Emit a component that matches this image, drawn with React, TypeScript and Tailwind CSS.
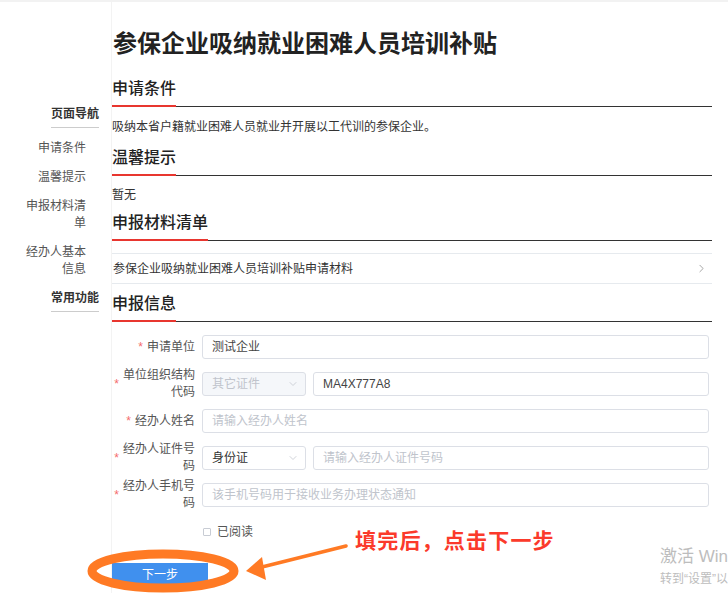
import React from 'react';
import { ChevronDown, ChevronRight } from 'lucide-react';

const navItems = ['申请条件', '温馨提示', '申报材料清单', '经办人基本信息'];

function SectionTitle({ title, className }: { title: string; className?: string }) {
    return (
        <div className={`flex border-b border-[#333] ${className ?? ''}`}>
            <span className="-mb-px border-b-2 border-[#e8362f] pb-[5px] text-[16px] font-medium leading-[22px] text-[#222]">
                {title}
            </span>
        </div>
    );
}

function FieldLabel({ text }: { text: string }) {
    return (
        <div className="flex w-[83px] shrink-0 items-center justify-end">
            <span className="mr-[4px] text-[12px] leading-[17px] text-[#f56c6c]">*</span>
            <span className="max-w-[72px] text-right text-[12px] leading-[17px] text-[#555]">{text}</span>
        </div>
    );
}

function TextInput({ value, placeholder }: { value?: string; placeholder?: string }) {
    return (
        <div className="flex h-[24px] min-w-0 flex-1 items-center rounded-[3px] border border-[#dcdfe6] bg-white px-[9px] text-[12px]">
            {value ? <span className="text-[#444]">{value}</span> : <span className="text-[#c0c4cc]">{placeholder}</span>}
        </div>
    );
}

function SelectBox({ value, disabled }: { value: string; disabled?: boolean }) {
    return (
        <div
            className={`flex h-[24px] w-[104px] shrink-0 items-center justify-between rounded-[3px] border border-[#dcdfe6] pl-[9px] pr-[6px] text-[12px] ${
                disabled ? 'bg-[#f5f7fa] text-[#c0c4cc]' : 'bg-white text-[#333]'
            }`}
        >
            <span>{value}</span>
            <ChevronDown size={12} strokeWidth={1.5} className="text-[#c0c4cc]" />
        </div>
    );
}

function FormRow({ label, children }: { label: string; children: React.ReactNode }) {
    return (
        <div className="flex h-[24px] items-center">
            <FieldLabel text={label} />
            <div className="ml-[7px] flex w-[507px] shrink-0 items-center gap-[7px]">{children}</div>
        </div>
    );
}

export default function App() {
    return (
        <div className="relative h-[593px] w-full overflow-hidden border-t-2 border-[#f2f2f2] bg-white font-['Liberation_Sans','Noto_Sans_CJK_SC',sans-serif]">
            <div className="flex">
                {/* Sidebar */}
                <aside className="flex h-[591px] w-[112px] shrink-0 flex-col items-end border-r border-[#f3f3f3] pr-[12px] pt-[104px]">
                    <div className="border-b border-[#ccc] pb-[4px] text-[12px] font-bold leading-[17px] text-[#333]">页面导航</div>
                    <ul className="mt-[12px] flex flex-col items-end gap-[12px] pr-[13px]">
                        {navItems.map((item) => (
                            <li key={item} className="max-w-[61px] text-right text-[12px] leading-[17px] text-[#555]">
                                {item}
                            </li>
                        ))}
                    </ul>
                    <div className="mt-[12px] border-b border-[#ccc] pb-[4px] text-[12px] font-bold leading-[17px] text-[#333]">常用功能</div>
                </aside>

                {/* Main */}
                <main className="w-[600px] shrink-0 pt-[26px]">
                    <h1 className="pl-px text-[24px] font-bold leading-[32px] text-[#222]">参保企业吸纳就业困难人员培训补贴</h1>

                    <SectionTitle title="申请条件" className="mt-[18px]" />
                    <p className="pt-[10px] text-[12px] leading-[20px] text-[#333]">吸纳本省户籍就业困难人员就业并开展以工代训的参保企业。</p>

                    <SectionTitle title="温馨提示" className="mt-[10px]" />
                    <p className="pt-[9px] text-[12px] leading-[20px] text-[#333]">暂无</p>

                    <SectionTitle title="申报材料清单" className="mt-[7px]" />
                    <div className="mt-[12px] flex h-[31px] items-center justify-between border-y border-[#e6eaee] pl-px pr-[4px]">
                        <span className="text-[12px] text-[#333]">参保企业吸纳就业困难人员培训补贴申请材料</span>
                        <ChevronRight size={13} strokeWidth={1.2} className="text-[#777]" />
                    </div>

                    <SectionTitle title="申报信息" className="mt-[9px]" />

                    <div className="mt-[13px] flex flex-col gap-[13px]">
                        <FormRow label="申请单位">
                            <TextInput value="测试企业" />
                        </FormRow>
                        <FormRow label="单位组织结构代码">
                            <SelectBox value="其它证件" disabled />
                            <TextInput value="MA4X777A8" />
                        </FormRow>
                        <FormRow label="经办人姓名">
                            <TextInput placeholder="请输入经办人姓名" />
                        </FormRow>
                        <FormRow label="经办人证件号码">
                            <SelectBox value="身份证" />
                            <TextInput placeholder="请输入经办人证件号码" />
                        </FormRow>
                        <FormRow label="经办人手机号码">
                            <TextInput placeholder="该手机号码用于接收业务办理状态通知" />
                        </FormRow>
                    </div>

                    <label className="mt-[15px] flex h-[20px] items-center gap-[6px] pl-[91px] text-[12px] text-[#555]">
                        <span className="h-[8px] w-[8px] rounded-[1px] border border-[#c8ccd4] bg-white" />
                        已阅读
                    </label>

                    <button className="mt-[21px] flex h-[24px] w-[96px] items-center justify-center bg-[#4090ee] text-[12px] text-white">
                        下一步
                    </button>
                </main>
            </div>

            {/* Annotation overlay */}
            <svg className="pointer-events-none absolute left-0 top-0" width="728" height="593" viewBox="0 0 728 593">
                <ellipse cx="163" cy="569" rx="71" ry="17" fill="none" stroke="#ff7a24" strokeWidth="9" />
                <path d="M346 544 L262 565" stroke="#ff7a24" strokeWidth="3.5" strokeLinecap="round" />
                <path d="M246 569 L262 555 L266 578 Z" fill="#ff7a24" />
            </svg>
            <div className="absolute left-[355px] top-[525px] text-[21px] font-bold leading-[28px] tracking-[1.2px] text-[#fb3a2b]">
                填完后，点击下一步
            </div>

            {/* Watermark */}
            <div className="pointer-events-none absolute left-[660px] top-[544px] whitespace-nowrap text-[#bdbdbd]">
                <div className="text-[17px] leading-[22px]">激活 Windows</div>
                <div className="mt-[3px] text-[12px] leading-[16px]">转到“设置”以激活 Windows。</div>
            </div>
        </div>
    );
}
